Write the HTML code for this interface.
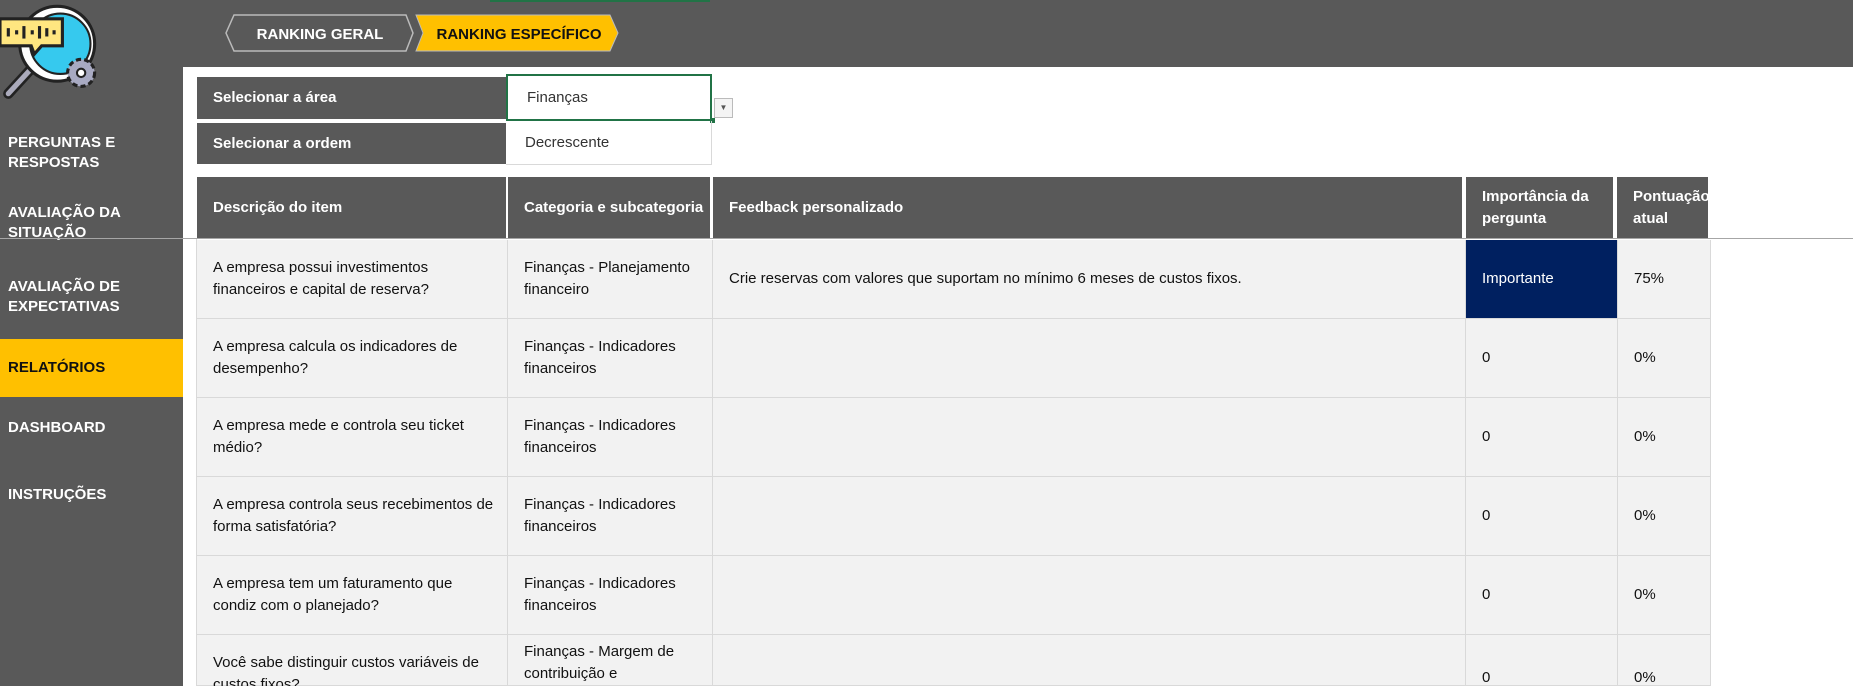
<!DOCTYPE html>
<html style="width:1853px;height:686px;overflow:hidden"><head><meta charset="utf-8"><style>
*{margin:0;padding:0;box-sizing:border-box}
html,body{overflow:hidden}
body{width:1853px;height:686px;overflow:hidden;background:#fff;font-family:"Liberation Sans",Arial,sans-serif;font-size:15px;color:#111;position:relative}
.abs{position:absolute}
.top{left:0;top:0;width:1853px;height:67px;background:#595959}
.side{left:0;top:0;width:183px;height:686px;background:#595959}
.nav{left:8px;color:#fff;font-weight:bold;font-size:15px;line-height:20px}
.hd{background:#595959;color:#fff;font-weight:bold;padding-left:16px;display:flex;align-items:center;line-height:20px}
.cell{background:#f2f2f2;border-right:1px solid #d9d9d9;border-bottom:1px solid #d9d9d9;padding-left:16px;display:flex;align-items:center;line-height:22px}
</style></head><body>
<div class="abs top"></div>
<div class="abs side"></div>
<div class="abs" style="left:490px;top:0;width:220px;height:2px;background:#217346"></div>
<svg class="abs" style="left:0;top:0" width="104" height="100" viewBox="0 0 100 96">
<line x1="8" y1="90" x2="30" y2="66" stroke="#222" stroke-width="10" stroke-linecap="round"/>
<line x1="8" y1="90" x2="30" y2="66" stroke="#aab" stroke-width="5" stroke-linecap="round"/>
<circle cx="55" cy="42" r="36" fill="#fff" stroke="#222" stroke-width="3"/>
<circle cx="58" cy="42" r="29" fill="#36c9ee" stroke="#222" stroke-width="2"/>
<path d="M0 18 H60 V44 H40 L33 52 L30 44 H0 Z" fill="#ffe680" stroke="#222" stroke-width="3"/>
<g stroke="#222" stroke-width="3"><line x1="8" y1="27" x2="8" y2="35"/><line x1="16" y1="29" x2="16" y2="33"/><line x1="23" y1="25" x2="23" y2="37"/><line x1="31" y1="29" x2="31" y2="33"/><line x1="38" y1="25" x2="38" y2="37"/><line x1="45" y1="27" x2="45" y2="35"/><line x1="52" y1="29" x2="52" y2="33"/></g>
<circle cx="78" cy="70" r="13" fill="#a8aac2" stroke="#222" stroke-width="3" stroke-dasharray="5 3"/>
<circle cx="78" cy="70" r="4" fill="#fff" stroke="#222" stroke-width="2"/>
</svg>
<svg class="abs" style="left:224px;top:14px" width="396" height="38">
<polygon points="10,1 182,1 189,19 182,37 10,37 2,19" fill="#595959" stroke="#bbb" stroke-width="1.5"/>
<polygon points="192,1 386,1 394,19 386,37 192,37 199,19" fill="#ffc000" stroke="#bbb" stroke-width="1"/>
<text x="96" y="25" text-anchor="middle" fill="#fff" font-weight="bold" font-size="15" font-family="Liberation Sans">RANKING GERAL</text>
<text x="295" y="25" text-anchor="middle" fill="#111" font-weight="bold" font-size="15" font-family="Liberation Sans">RANKING ESPECÍFICO</text>
</svg>
<div class="abs nav" style="top:133px">PERGUNTAS E<br>RESPOSTAS</div>
<div class="abs nav" style="top:203px">AVALIAÇÃO DA<br>SITUAÇÃO</div>
<div class="abs nav" style="top:277px">AVALIAÇÃO DE<br>EXPECTATIVAS</div>
<div class="abs" style="left:0;top:339px;width:183px;height:58px;background:#ffc000"></div>
<div class="abs nav" style="top:358px;color:#111">RELATÓRIOS</div>
<div class="abs nav" style="top:418px">DASHBOARD</div>
<div class="abs nav" style="top:485px">INSTRUÇÕES</div>

<div class="abs hd" style="left:197px;top:77px;width:309px;height:42px">Selecionar a área</div>
<div class="abs hd" style="left:197px;top:123px;width:309px;height:41px">Selecionar a ordem</div>
<div class="abs" style="left:506px;top:74px;width:206px;height:47px;border:2px solid #217346;padding-left:19px;line-height:43px;color:#333">Finanças</div>
<div class="abs" style="left:710px;top:118px;width:5px;height:5px;background:#217346"></div>
<div class="abs" style="left:506px;top:121px;width:206px;height:44px;border-right:1px solid #d9d9d9;border-bottom:1px solid #d9d9d9;padding-left:19px;line-height:44px;color:#333">Decrescente</div>
<div class="abs" style="left:714px;top:98px;width:19px;height:20px;border:1px solid #bbb;background:#f4f4f4;font-size:8px;color:#555;text-align:center;line-height:18px">▼</div>

<div class="abs hd" style="left:197px;top:177px;width:309px;height:61px">Descrição do item</div>
<div class="abs hd" style="left:508px;top:177px;width:202px;height:61px">Categoria e subcategoria</div>
<div class="abs hd" style="left:713px;top:177px;width:749px;height:61px">Feedback personalizado</div>
<div class="abs hd" style="left:1466px;top:177px;width:147px;height:61px;line-height:22px">Importância da<br>pergunta</div>
<div class="abs hd" style="left:1617px;top:177px;width:91px;height:61px;line-height:22px;white-space:nowrap;overflow:hidden">Pontuação<br>atual</div>
<div class="abs" style="left:0;top:238px;width:1853px;height:1px;background:#a6a6a6"></div>
<div class="abs" style="left:183px;top:239px;width:14px;height:447px;background:#fff;border-right:1px solid #d9d9d9"></div>

<div class="abs" style="left:197px;top:240px;height:446px;overflow:hidden">
<div style="display:grid;grid-template-columns:311px 205px 753px 152px 93px;grid-template-rows:79px 79px 79px 79px 79px 51px">
<div class="cell">A empresa possui investimentos<br>financeiros e capital de reserva?</div><div class="cell">Finanças - Planejamento<br>financeiro</div><div class="cell">Crie reservas com valores que suportam no mínimo 6 meses de custos fixos.</div><div class="cell" style="background:#002060;color:#fff">Importante</div><div class="cell">75%</div>
<div class="cell">A empresa calcula os indicadores de<br>desempenho?</div><div class="cell">Finanças - Indicadores<br>financeiros</div><div class="cell"></div><div class="cell">0</div><div class="cell">0%</div>
<div class="cell">A empresa mede e controla seu ticket<br>médio?</div><div class="cell">Finanças - Indicadores<br>financeiros</div><div class="cell"></div><div class="cell">0</div><div class="cell">0%</div>
<div class="cell">A empresa controla seus recebimentos de<br>forma satisfatória?</div><div class="cell">Finanças - Indicadores<br>financeiros</div><div class="cell"></div><div class="cell">0</div><div class="cell">0%</div>
<div class="cell">A empresa tem um faturamento que<br>condiz com o planejado?</div><div class="cell">Finanças - Indicadores<br>financeiros</div><div class="cell"></div><div class="cell">0</div><div class="cell">0%</div>
<div class="cell" style="align-items:flex-start;padding-top:17px">Você sabe distinguir custos variáveis de<br>custos fixos?</div><div class="cell" style="align-items:flex-start;padding-top:6px">Finanças - Margem de<br>contribuição e</div><div class="cell"></div><div class="cell" style="align-items:flex-start;padding-top:32px">0</div><div class="cell" style="align-items:flex-start;padding-top:32px">0%</div>
</div></div>
</body></html>
